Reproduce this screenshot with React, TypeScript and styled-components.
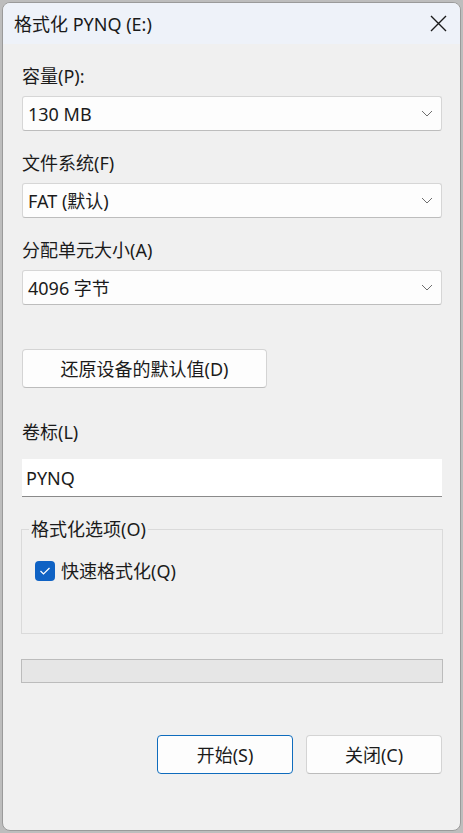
import React from "react";
import styled, { createGlobalStyle } from "styled-components";

const Global = createGlobalStyle`
  html, body { margin: 0; padding: 0; }
  body {
    background: #bdbdbd;
    font-family: "Noto Sans", "Noto Sans CJK SC", sans-serif;
    color: #1b1b1b;
    width: 463px;
    height: 833px;
    overflow: hidden;
  }
  * { box-sizing: border-box; }
`;

const Window = styled.div`
  margin: 2px 0 0 2px;
  width: 459px;
  height: 829px;
  border: 1px solid #9a9a9a;
  border-radius: 8px;
  overflow: hidden;
  background: #f0f0f0;
  display: flex;
  flex-direction: column;
`;

const TitleBar = styled.div`
  height: 41px;
  flex: none;
  background: #eef2f9;
  display: flex;
  align-items: center;
  justify-content: space-between;
  padding: 0 13px 0 11px;
`;

const Title = styled.div`
  font-size: 18px;
  line-height: 24px;
  color: #1a1a1a;
`;

const Body = styled.div`
  flex: 1;
  display: flex;
  flex-direction: column;
  padding: 20px 18px 0 19px;
`;

const Label = styled.div<{ $mt?: number; $mb?: number }>`
  font-size: 18px;
  line-height: 24px;
  margin-top: ${(p) => p.$mt ?? 0}px;
  margin-bottom: ${(p) => p.$mb ?? 8}px;
`;

const Combo = styled.div`
  height: 35px;
  background: #fdfdfd;
  border: 1px solid #d6d6d6;
  border-bottom-color: #bdbdbd;
  border-radius: 3px;
  display: flex;
  align-items: center;
  justify-content: space-between;
  padding: 0 8px 0 5px;
  font-size: 18px;
  line-height: 24px;
`;

const Button = styled.button<{ $primary?: boolean; $width: number }>`
  width: ${(p) => p.$width}px;
  height: 39px;
  flex: none;
  background: #fdfdfd;
  border: 1px solid ${(p) => (p.$primary ? "#0f6cbd" : "#d4d4d4")};
  border-bottom-color: ${(p) => (p.$primary ? "#0f6cbd" : "#bcbcbc")};
  border-radius: 4px;
  font-family: inherit;
  font-size: 18px;
  line-height: 24px;
  color: #1b1b1b;
  padding: 0;
  display: flex;
  align-items: center;
  justify-content: center;
`;

const ResetButton = styled(Button)`
  margin-top: 44px;
`;

const TextInput = styled.div`
  height: 38px;
  background: #ffffff;
  border-bottom: 1px solid #8a8a8a;
  display: flex;
  align-items: center;
  padding-left: 4px;
  font-size: 18px;
  line-height: 24px;
`;

const Group = styled.fieldset`
  margin: 20px -1px 0 -1px;
  padding: 0 7px 50px 7px;
  border: 1px solid #dadada;
  min-width: 0;
`;

const Legend = styled.legend`
  padding: 0 2px;
  font-size: 18px;
  line-height: 24px;
`;

const CheckRow = styled.div`
  margin: 18px 0 0 6px;
  display: flex;
  align-items: center;
  gap: 6px;
  font-size: 18px;
  line-height: 24px;
`;

const CheckBox = styled.span`
  width: 20px;
  height: 20px;
  border-radius: 4px;
  background: #0f62c4;
  display: flex;
  align-items: center;
  justify-content: center;
`;

const Progress = styled.div`
  margin: 25px -1px 0 -1px;
  height: 24px;
  background: #e6e6e6;
  border: 1px solid #bcbcbc;
`;

const ButtonRow = styled.div`
  margin: 52px 0 0 0;
  display: flex;
  justify-content: flex-end;
  gap: 13px;
`;

const Chevron = () => (
  <svg width="12" height="7" viewBox="0 0 12 7">
    <path d="M1 1 L6 6 L11 1" fill="none" stroke="#6e6e6e" strokeWidth="1" />
  </svg>
);

const CloseIcon = () => (
  <svg width="17" height="17" viewBox="0 0 17 17">
    <path d="M1 1 L16 16 M16 1 L1 16" stroke="#1a1a1a" strokeWidth="1.4" />
  </svg>
);

const Check = () => (
  <svg width="12" height="10" viewBox="0 0 12 10">
    <path d="M1.5 5 L4.5 8 L10.5 2" fill="none" stroke="#ffffff" strokeWidth="1.2" />
  </svg>
);

const combos = [
  { label: "容量(P):", value: "130 MB", mt: 0 },
  { label: "文件系统(F)", value: "FAT (默认)", mt: 20 },
  { label: "分配单元大小(A)", value: "4096 字节", mt: 20 },
];

export default function App() {
  return (
    <>
      <Global />
      <Window>
        <TitleBar>
          <Title>格式化 PYNQ (E:)</Title>
          <CloseIcon />
        </TitleBar>
        <Body>
          {combos.map((c) => (
            <React.Fragment key={c.label}>
              <Label $mt={c.mt}>{c.label}</Label>
              <Combo>
                <span>{c.value}</span>
                <Chevron />
              </Combo>
            </React.Fragment>
          ))}
          <ResetButton $width={245}>还原设备的默认值(D)</ResetButton>
          <Label $mt={32} $mb={15}>卷标(L)</Label>
          <TextInput>PYNQ</TextInput>
          <Group>
            <Legend>格式化选项(O)</Legend>
            <CheckRow>
              <CheckBox>
                <Check />
              </CheckBox>
              <span>快速格式化(Q)</span>
            </CheckRow>
          </Group>
          <Progress />
          <ButtonRow>
            <Button $primary $width={136}>开始(S)</Button>
            <Button $width={136}>关闭(C)</Button>
          </ButtonRow>
        </Body>
      </Window>
    </>
  );
}
